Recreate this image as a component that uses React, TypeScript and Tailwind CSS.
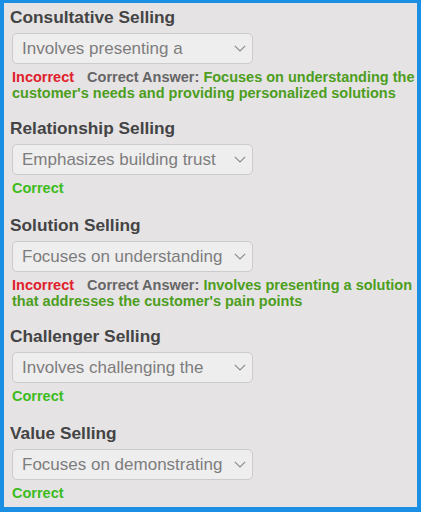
import React from "react";

type Item = {
  title: string;
  value: string;
  correct: boolean;
  answer?: string;
};

const items: Item[] = [
  {
    title: "Consultative Selling",
    value: "Involves presenting a",
    correct: false,
    answer:
      "Focuses on understanding the customer's needs and providing personalized solutions",
  },
  { title: "Relationship Selling", value: "Emphasizes building trust", correct: true },
  {
    title: "Solution Selling",
    value: "Focuses on understanding",
    correct: false,
    answer: "Involves presenting a solution that addresses the customer's pain points",
  },
  { title: "Challenger Selling", value: "Involves challenging the", correct: true },
  { title: "Value Selling", value: "Focuses on demonstrating", correct: true },
];

function Chevron() {
  return (
    <svg width="12" height="7" viewBox="0 0 12 7" fill="none" className="shrink-0">
      <path d="M0.8 0.8 L6 6 L11.2 0.8" stroke="#8a8a8a" strokeWidth="1.1" />
    </svg>
  );
}

export default function App() {
  return (
    <div
      className="w-[421px] h-[512px] overflow-hidden bg-[#e5e3e4] border-solid border-[#1a8fe3] border-t-[3px] border-l-[4px] border-r-[4px] border-b-[5px] pt-[4px] pl-[6px] pr-[2px]"
      style={{ fontFamily: '"Liberation Sans", Arial, sans-serif' }}
    >
      {items.map((it) => (
        <div key={it.title} className={it.correct ? "mb-[19px]" : "mb-[17px]"}>
          <div className="text-[17.3px] leading-[20px] font-bold text-[#444444]">{it.title}</div>
          <div className="ml-[2px] mt-[6px] w-[241px] h-[31px] rounded-[5px] border border-[#cdcbcc] bg-[#efeeef] flex items-center pl-[9px] pr-[6px]">
            <span className="flex-1 text-[17px] leading-[20px] text-[#7d7d7d] whitespace-nowrap overflow-hidden">
              {it.value}
            </span>
            <Chevron />
          </div>
          <div className="ml-[2px] mt-[5px] text-[14.5px] leading-[16px] font-bold">
            {it.correct ? (
              <span className="text-[#3cbc1c]">Correct</span>
            ) : (
              <>
                <span className="text-[#e0202a] mr-[13px]">Incorrect</span>
                <span className="text-[#666666]">Correct Answer: </span>
                <span className="text-[#4c9e1c]">{it.answer}</span>
              </>
            )}
          </div>
        </div>
      ))}
    </div>
  );
}
